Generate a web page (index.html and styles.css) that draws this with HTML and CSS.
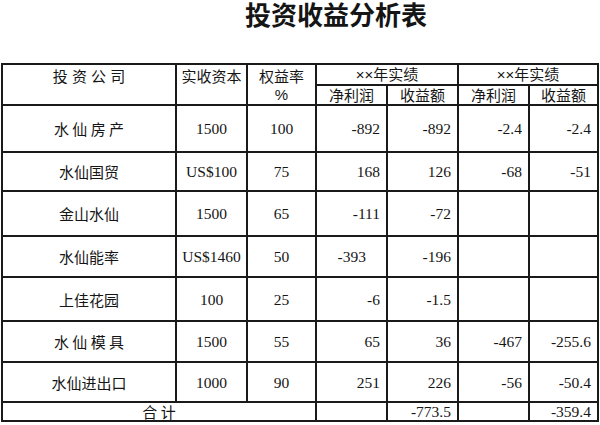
FILE: index.html
```html
<!DOCTYPE html>
<html lang="zh-CN">
<head>
<meta charset="utf-8">
<title>投资收益分析表</title>
<link rel="stylesheet" href="styles.css">
</head>
<body>
<h1 class="title">投资收益分析表</h1>
<table class="sheet">
  <colgroup>
    <col class="c-name">
    <col class="c-cap">
    <col class="c-rate">
    <col class="c-num">
    <col class="c-num">
    <col class="c-num">
    <col class="c-num2">
  </colgroup>
  <thead>
    <tr class="h1">
      <th rowspan="2" class="top">投 资 公 司</th>
      <th rowspan="2" class="top">实收资本</th>
      <th rowspan="2" class="top">权益率<br>%</th>
      <th colspan="2">××年实绩</th>
      <th colspan="2">××年实绩</th>
    </tr>
    <tr class="h2">
      <th>净利润</th>
      <th>收益额</th>
      <th>净利润</th>
      <th>收益额</th>
    </tr>
  </thead>
  <tbody>
    <tr class="r1">
      <td class="name">水 仙 房 产</td><td class="mid">1500</td><td class="mid">100</td>
      <td class="num">-892</td><td class="num">-892</td><td class="num">-2.4</td><td class="num">-2.4</td>
    </tr>
    <tr class="r2">
      <td class="name">水仙国贸</td><td class="mid">US$100</td><td class="mid">75</td>
      <td class="num">168</td><td class="num">126</td><td class="num">-68</td><td class="num">-51</td>
    </tr>
    <tr class="r3">
      <td class="name">金山水仙</td><td class="mid">1500</td><td class="mid">65</td>
      <td class="num">-111</td><td class="num">-72</td><td class="num"></td><td class="num"></td>
    </tr>
    <tr class="r4">
      <td class="name">水仙能率</td><td class="mid">US$1460</td><td class="mid">50</td>
      <td class="num shift">-393</td><td class="num">-196</td><td class="num"></td><td class="num"></td>
    </tr>
    <tr class="r5">
      <td class="name">上佳花园</td><td class="mid">100</td><td class="mid">25</td>
      <td class="num">-6</td><td class="num">-1.5</td><td class="num"></td><td class="num"></td>
    </tr>
    <tr class="r6">
      <td class="name">水 仙 模 具</td><td class="mid">1500</td><td class="mid">55</td>
      <td class="num">65</td><td class="num">36</td><td class="num">-467</td><td class="num">-255.6</td>
    </tr>
    <tr class="r7">
      <td class="name">水仙进出口</td><td class="mid">1000</td><td class="mid">90</td>
      <td class="num">251</td><td class="num">226</td><td class="num">-56</td><td class="num">-50.4</td>
    </tr>
    <tr class="r8">
      <td colspan="3" class="name total">合 计</td>
      <td class="num tot"></td><td class="num tot">-773.5</td><td class="num tot"></td><td class="num tot">-359.4</td>
    </tr>
  </tbody>
</table>
</body>
</html>
```

FILE: styles.css
```css
html, body {
  margin: 0;
  padding: 0;
  background: #ffffff;
  color: #151515;
}

body {
  width: 600px;
  height: 425px;
  overflow: hidden;
}

.title {
  margin: 0 0 35px 0;
  padding-left: 72px;
  height: 28px;
  line-height: 28px;
  font-family: "Noto Sans CJK SC", sans-serif;
  font-size: 26px;
  font-weight: 700;
  text-align: center;
}

.sheet {
  margin-left: 1px;
  border-collapse: collapse;
  table-layout: fixed;
  width: 597px;
  font-family: "Liberation Serif", "Noto Sans CJK SC", serif;
  font-size: 15.5px;
  border: 2px solid #1a1a1a;
}

.c-name { width: 174px; }
.c-cap { width: 71px; }
.c-rate { width: 69px; }
.c-num { width: 71px; }
.c-num2 { width: 69px; }

.sheet th,
.sheet td {
  border: 2px solid #1a1a1a;
  padding: 0;
  overflow: hidden;
  white-space: nowrap;
}

.sheet th {
  font-family: "Liberation Sans", "Noto Sans CJK SC", sans-serif;
  font-weight: 400;
  font-size: 15px;
  line-height: 17px;
  text-align: center;
  vertical-align: middle;
}

.sheet th.top {
  vertical-align: top;
  padding-top: 3px;
  line-height: 18px;
}

.h1 { height: 20px; }
.h2 { height: 17px; }

.r1 { height: 47px; }
.r2 { height: 39px; }
.r3 { height: 45px; }
.r4 { height: 41px; }
.r5 { height: 44px; }
.r6 { height: 41px; }
.r7 { height: 40px; }
.r8 { height: 19px; }

.sheet td {
  vertical-align: middle;
  line-height: 17px;
}

.name {
  font-family: "Noto Sans CJK SC", sans-serif;
  font-size: 15px;
  text-align: center;
}

.mid {
  text-align: center;
}

.num {
  text-align: right;
  padding-right: 6px !important;
}

.num.shift {
  padding-right: 20px !important;
}

.sheet td.total,
.sheet td.tot {
  line-height: 16px;
  vertical-align: bottom;
  overflow: visible;
}
```
